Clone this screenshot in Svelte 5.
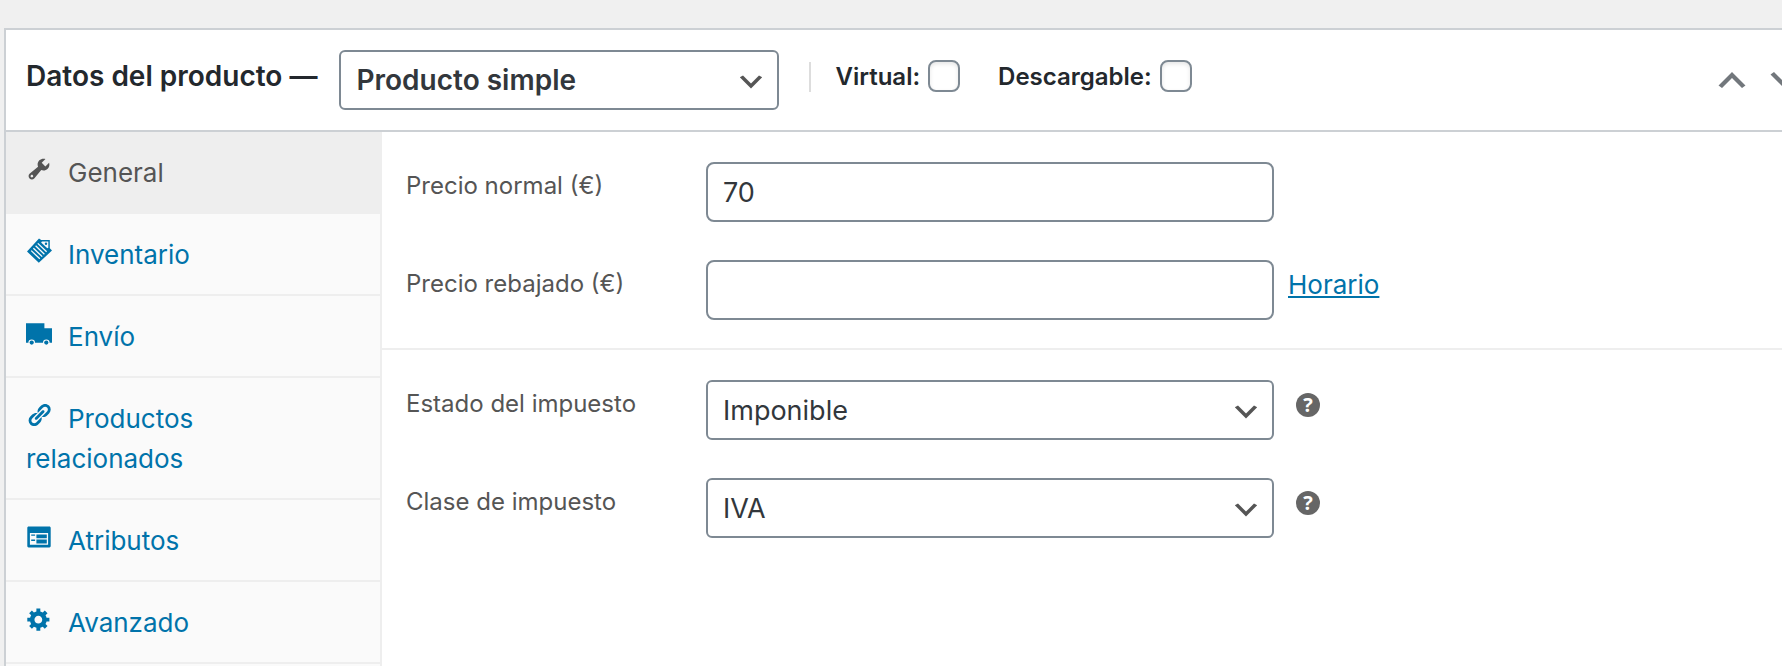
<script lang="ts">
	type Tab = { id: string; label: string };

	const tabs: Tab[] = [
		{ id: 'general', label: 'General' },
		{ id: 'inventory', label: 'Inventario' },
		{ id: 'shipping', label: 'Envío' },
		{ id: 'linked', label: 'Productos relacionados' },
		{ id: 'attributes', label: 'Atributos' },
		{ id: 'advanced', label: 'Avanzado' }
	];

	let activeTab = $state('general');
	let productType = $state('simple');
	let virtual = $state(false);
	let downloadable = $state(false);
	let regularPrice = $state('70');
	let salePrice = $state('');
	let taxStatus = $state('taxable');
	let taxClass = $state('iva');

	function selectTab(event: MouseEvent, id: string) {
		event.preventDefault();
		activeTab = id;
	}
</script>

{#snippet icon(id: string)}
	{#if id === 'general'}
		<svg class="icon" viewBox="0 0 20 20" aria-hidden="true">
			<path d="M16.68 9.77c-1.34 1.34-3.3 1.67-4.95.99l-5.41 6.52c-.99.99-2.59.99-3.58 0s-.99-2.59 0-3.57l6.52-5.42c-.68-1.65-.35-3.61.99-4.95 1.28-1.28 3.12-1.62 4.72-1.06l-2.89 2.89 2.82 2.82 2.86-2.87c.53 1.58.18 3.39-1.08 4.65zM3.81 16.21c.4.39 1.04.39 1.43 0 .4-.4.4-1.04 0-1.43-.39-.4-1.03-.4-1.43 0-.39.39-.39 1.03 0 1.43z" />
		</svg>
	{:else if id === 'inventory'}
		<svg class="icon" viewBox="0 0 26 26" aria-hidden="true">
			<path d="M1 13.5 13 .6l2.2 1.4h8.6v8.2l2.2 2.3-13.2 12.3z" />
			<path class="cut" d="m16 3.6 6.3-.1v6.3l-1 .4-6.2-5.8z" />
			<circle cx="20" cy="5.8" r="1.2" />
			<path class="lines" d="m11.8 5.4 8.8 8.4M9.6 7.8l8.8 8.4M7.4 10.2l8.8 8.4M5.2 12.6l8.6 8.2" />
		</svg>
	{:else if id === 'shipping'}
		<svg class="icon" viewBox="0 0 26 26" aria-hidden="true">
			<path d="M0 3.3h18.4v5H26v14.4h-2.4a3.3 3.3 0 0 0-6.6 0H9a3.3 3.3 0 0 0-6.6 0H0z" />
			<circle cx="5.7" cy="22.6" r="2.1" />
			<circle cx="20.3" cy="22.6" r="2.1" />
		</svg>
	{:else if id === 'linked'}
		<svg class="icon" viewBox="0 0 20 20" aria-hidden="true">
			<path d="M17.74 2.76c1.68 1.69 1.68 4.41 0 6.1l-1.53 1.52c-1.12 1.12-2.7 1.47-4.14 1.09l2.62-2.61.76-.77.76-.76c.84-.84.84-2.2 0-3.04-.84-.85-2.2-.85-3.04 0l-.77.76-3.38 3.38c-.37-1.44-.02-3.02 1.1-4.14l1.52-1.53c1.69-1.68 4.42-1.68 6.1 0zM8.59 13.43l5.34-5.34c.42-.42.42-1.1 0-1.52-.44-.43-1.13-.39-1.53 0l-5.33 5.34c-.42.42-.42 1.1 0 1.52.44.43 1.13.39 1.52 0zm-.76 2.29l4.14-4.15c.38 1.44.03 3.02-1.09 4.14l-1.52 1.53c-1.69 1.68-4.41 1.68-6.1 0-1.68-1.68-1.68-4.42 0-6.1l1.53-1.52c1.12-1.12 2.7-1.47 4.14-1.1l-4.14 4.15c-.85.84-.85 2.2 0 3.05.84.84 2.2.84 3.04 0z" />
		</svg>
	{:else if id === 'attributes'}
		<svg class="icon" viewBox="0 0 20 20" aria-hidden="true">
			<path d="M2 2h16c.55 0 1 .45 1 1v14c0 .55-.45 1-1 1H2c-.55 0-1-.45-1-1V3c0-.55.45-1 1-1zm15 14V7H3v9h14zM4 8v1h3V8H4zm4 0v3h8V8H8zm-4 4v1h3v-1H4zm4 0v3h8v-3H8z" />
		</svg>
	{:else}
		<svg class="icon" viewBox="0 0 20 20" aria-hidden="true">
			<path d="M18 12h-2.18c-.17.7-.44 1.35-.81 1.93l1.54 1.54-2.1 2.1-1.54-1.54c-.58.36-1.23.63-1.91.79V19H8v-2.18c-.68-.16-1.33-.43-1.91-.79l-1.54 1.54-2.12-2.12 1.54-1.54c-.36-.58-.63-1.23-.79-1.91H1V9.03h2.17c.16-.7.44-1.35.8-1.94L2.43 5.55l2.1-2.1 1.54 1.54c.58-.37 1.24-.64 1.93-.81V2h3v2.18c.68.16 1.33.43 1.91.79l1.54-1.54 2.12 2.12-1.54 1.54c.36.59.64 1.24.8 1.94H18V12zm-8.5 1.5c1.66 0 3-1.34 3-3s-1.34-3-3-3-3 1.34-3 3 1.34 3 3 3z" />
		</svg>
	{/if}
{/snippet}

<section class="panel">
	<header class="panel-header">
		<h2>Datos del producto —</h2>
		<select class="product-type" aria-label="Tipo de producto" bind:value={productType}>
			<option value="simple">Producto simple</option>
		</select>
		<div class="divider"></div>
		<label class="check virtual">
			Virtual:
			<input type="checkbox" bind:checked={virtual} />
		</label>
		<label class="check">
			Descargable:
			<input type="checkbox" bind:checked={downloadable} />
		</label>
		<div class="handles">
			<button type="button" aria-label="Subir">
				<svg width="28" height="16" viewBox="0 0 28 16">
					<path d="M14 0l13.500 13.500-3.500 2.500-10-10-10 10-3.500-2.500z" />
				</svg>
			</button>
			<button type="button" aria-label="Bajar">
				<svg width="28" height="16" viewBox="0 0 28 16">
					<path d="M14 16L.5 2.500 4 0l10 10 10-10 3.500 2.500z" />
				</svg>
			</button>
		</div>
	</header>

	<div class="panel-body">
		<nav class="tabs">
			<ul>
				{#each tabs as tab (tab.id)}
					<li class:active={tab.id === activeTab}>
						<a href="#{tab.id}" onclick={(e) => selectTab(e, tab.id)}>{@render icon(tab.id)}{tab.label}</a>
					</li>
				{/each}
			</ul>
		</nav>

		<div class="options">
			<div class="group">
				<div class="field">
					<label for="regular-price">Precio normal (€)</label>
					<input id="regular-price" type="text" bind:value={regularPrice} />
				</div>
				<div class="field">
					<label for="sale-price">Precio rebajado (€)</label>
					<input id="sale-price" type="text" bind:value={salePrice} />
					<a class="schedule" href="#schedule">Horario</a>
				</div>
			</div>
			<div class="group">
				<div class="field">
					<label for="tax-status">Estado del impuesto</label>
					<select id="tax-status" bind:value={taxStatus}>
						<option value="taxable">Imponible</option>
					</select>
					<span class="help">?</span>
				</div>
				<div class="field">
					<label for="tax-class">Clase de impuesto</label>
					<select id="tax-class" bind:value={taxClass}>
						<option value="iva">IVA</option>
					</select>
					<span class="help">?</span>
				</div>
			</div>
		</div>
	</div>
</section>

<style>
	:global(body) {
		background: #f0f0f0;
		overflow: hidden;
	}

	.panel {
		display: flex;
		flex-direction: column;
		box-sizing: border-box;
		min-height: calc(100vh - 28px);
		margin: 28px 0 0 4px;
		border: 2px solid #ccd0d4;
		border-width: 2px 0 0 2px;
		background: #fff;
		color: #23282d;
		font-family: Inter, 'Liberation Sans', sans-serif;
		font-size: 26px;
		overflow: hidden;
	}

	.panel-header {
		display: flex;
		align-items: flex-start;
		padding: 20px 0 20px 20px;
		border-bottom: 2px solid #ccd0d4;
	}

	h2 {
		margin: 0;
		font-size: 28px;
		font-weight: 600;
		line-height: 52px;
		white-space: nowrap;
	}

	select,
	input[type='text'] {
		box-sizing: border-box;
		height: 60px;
		margin: 0;
		padding: 0 15px;
		border: 2px solid #7e8993;
		border-radius: 8px;
		background: #fff;
		color: #32373c;
		font-family: inherit;
		font-size: 27px;
	}

	select {
		appearance: none;
		padding-right: 48px;
		border-radius: 6px;
		background: #fff url("data:image/svg+xml,%3Csvg width='20' height='20' viewBox='0 0 20 20' xmlns='http://www.w3.org/2000/svg'%3E%3Cpath d='M5 6l5 5 5-5 2 1-7 7-7-7 2-1z' fill='%23555'/%3E%3C/svg%3E") no-repeat right 10px top 60%;
		background-size: 32px 32px;
	}

	.product-type {
		flex: 0 1 440px;
		margin-left: 22px;
		font-size: 28px;
		font-weight: 600;
	}

	.divider {
		width: 2px;
		height: 30px;
		margin: 12px 24px 0 30px;
		background: #ddd;
	}

	.check {
		display: flex;
		align-items: center;
		gap: 8px;
		height: 52px;
		font-size: 24px;
		font-weight: 600;
	}

	.check.virtual {
		margin-right: 38px;
	}

	input[type='checkbox'] {
		appearance: none;
		box-sizing: border-box;
		width: 32px;
		height: 32px;
		margin: 0;
		border: 2px solid #7e8993;
		border-radius: 8px;
		background: #fff;
		box-shadow: inset 0 2px 4px rgba(0, 0, 0, 0.1);
	}

	input[type='checkbox']:checked {
		background: #0073aa;
	}

	.handles {
		display: flex;
		margin-left: auto;
		margin-right: -28px;
	}

	.handles button {
		display: flex;
		align-items: center;
		justify-content: center;
		width: 52px;
		height: 60px;
		padding: 0;
		border: none;
		background: none;
		cursor: pointer;
	}

	.handles svg {
		fill: #72777c;
	}

	.panel-body {
		display: flex;
		flex: 1;
	}

	.tabs {
		box-sizing: border-box;
		flex: 0 0 376px;
		border-right: 2px solid #eee;
		background: #fafafa;
	}

	.tabs ul {
		margin: 0;
		padding: 0;
		list-style: none;
	}

	.tabs a {
		display: block;
		padding: 21px 40px 19px 20px;
		border-bottom: 2px solid #eee;
		color: #0073aa;
		font-size: 26px;
		line-height: 40px;
		text-decoration: none;
	}

	.tabs .active a {
		background: #eee;
		color: #555;
	}

	.icon {
		width: 26px;
		height: 26px;
		margin-right: 16px;
		fill: currentColor;
	}

	.icon .cut {
		fill: #fafafa;
	}

	.icon .lines {
		fill: none;
		stroke: #fafafa;
		stroke-width: 1.3;
	}

	.options {
		flex: 1;
		min-width: 0;
	}

	.group {
		display: flex;
		flex-direction: column;
		gap: 38px;
		padding: 30px 24px 28px;
	}

	.group + .group {
		border-top: 2px solid #eee;
	}

	.field {
		display: flex;
		align-items: flex-start;
	}

	.field label {
		flex: 0 0 300px;
		color: #555;
		font-size: 24px;
		line-height: 48px;
	}

	.field select,
	.field input {
		flex: 0 1 568px;
		min-width: 0;
	}

	.schedule {
		margin-left: 14px;
		color: #0073aa;
		font-size: 26px;
		line-height: 50px;
	}

	.help {
		width: 24px;
		height: 24px;
		margin: 13px 0 0 22px;
		border-radius: 50%;
		background: #666;
		color: #fff;
		font-family: 'Open Sans', sans-serif;
		font-size: 20px;
		font-weight: 700;
		line-height: 24px;
		text-align: center;
		cursor: help;
	}
</style>
